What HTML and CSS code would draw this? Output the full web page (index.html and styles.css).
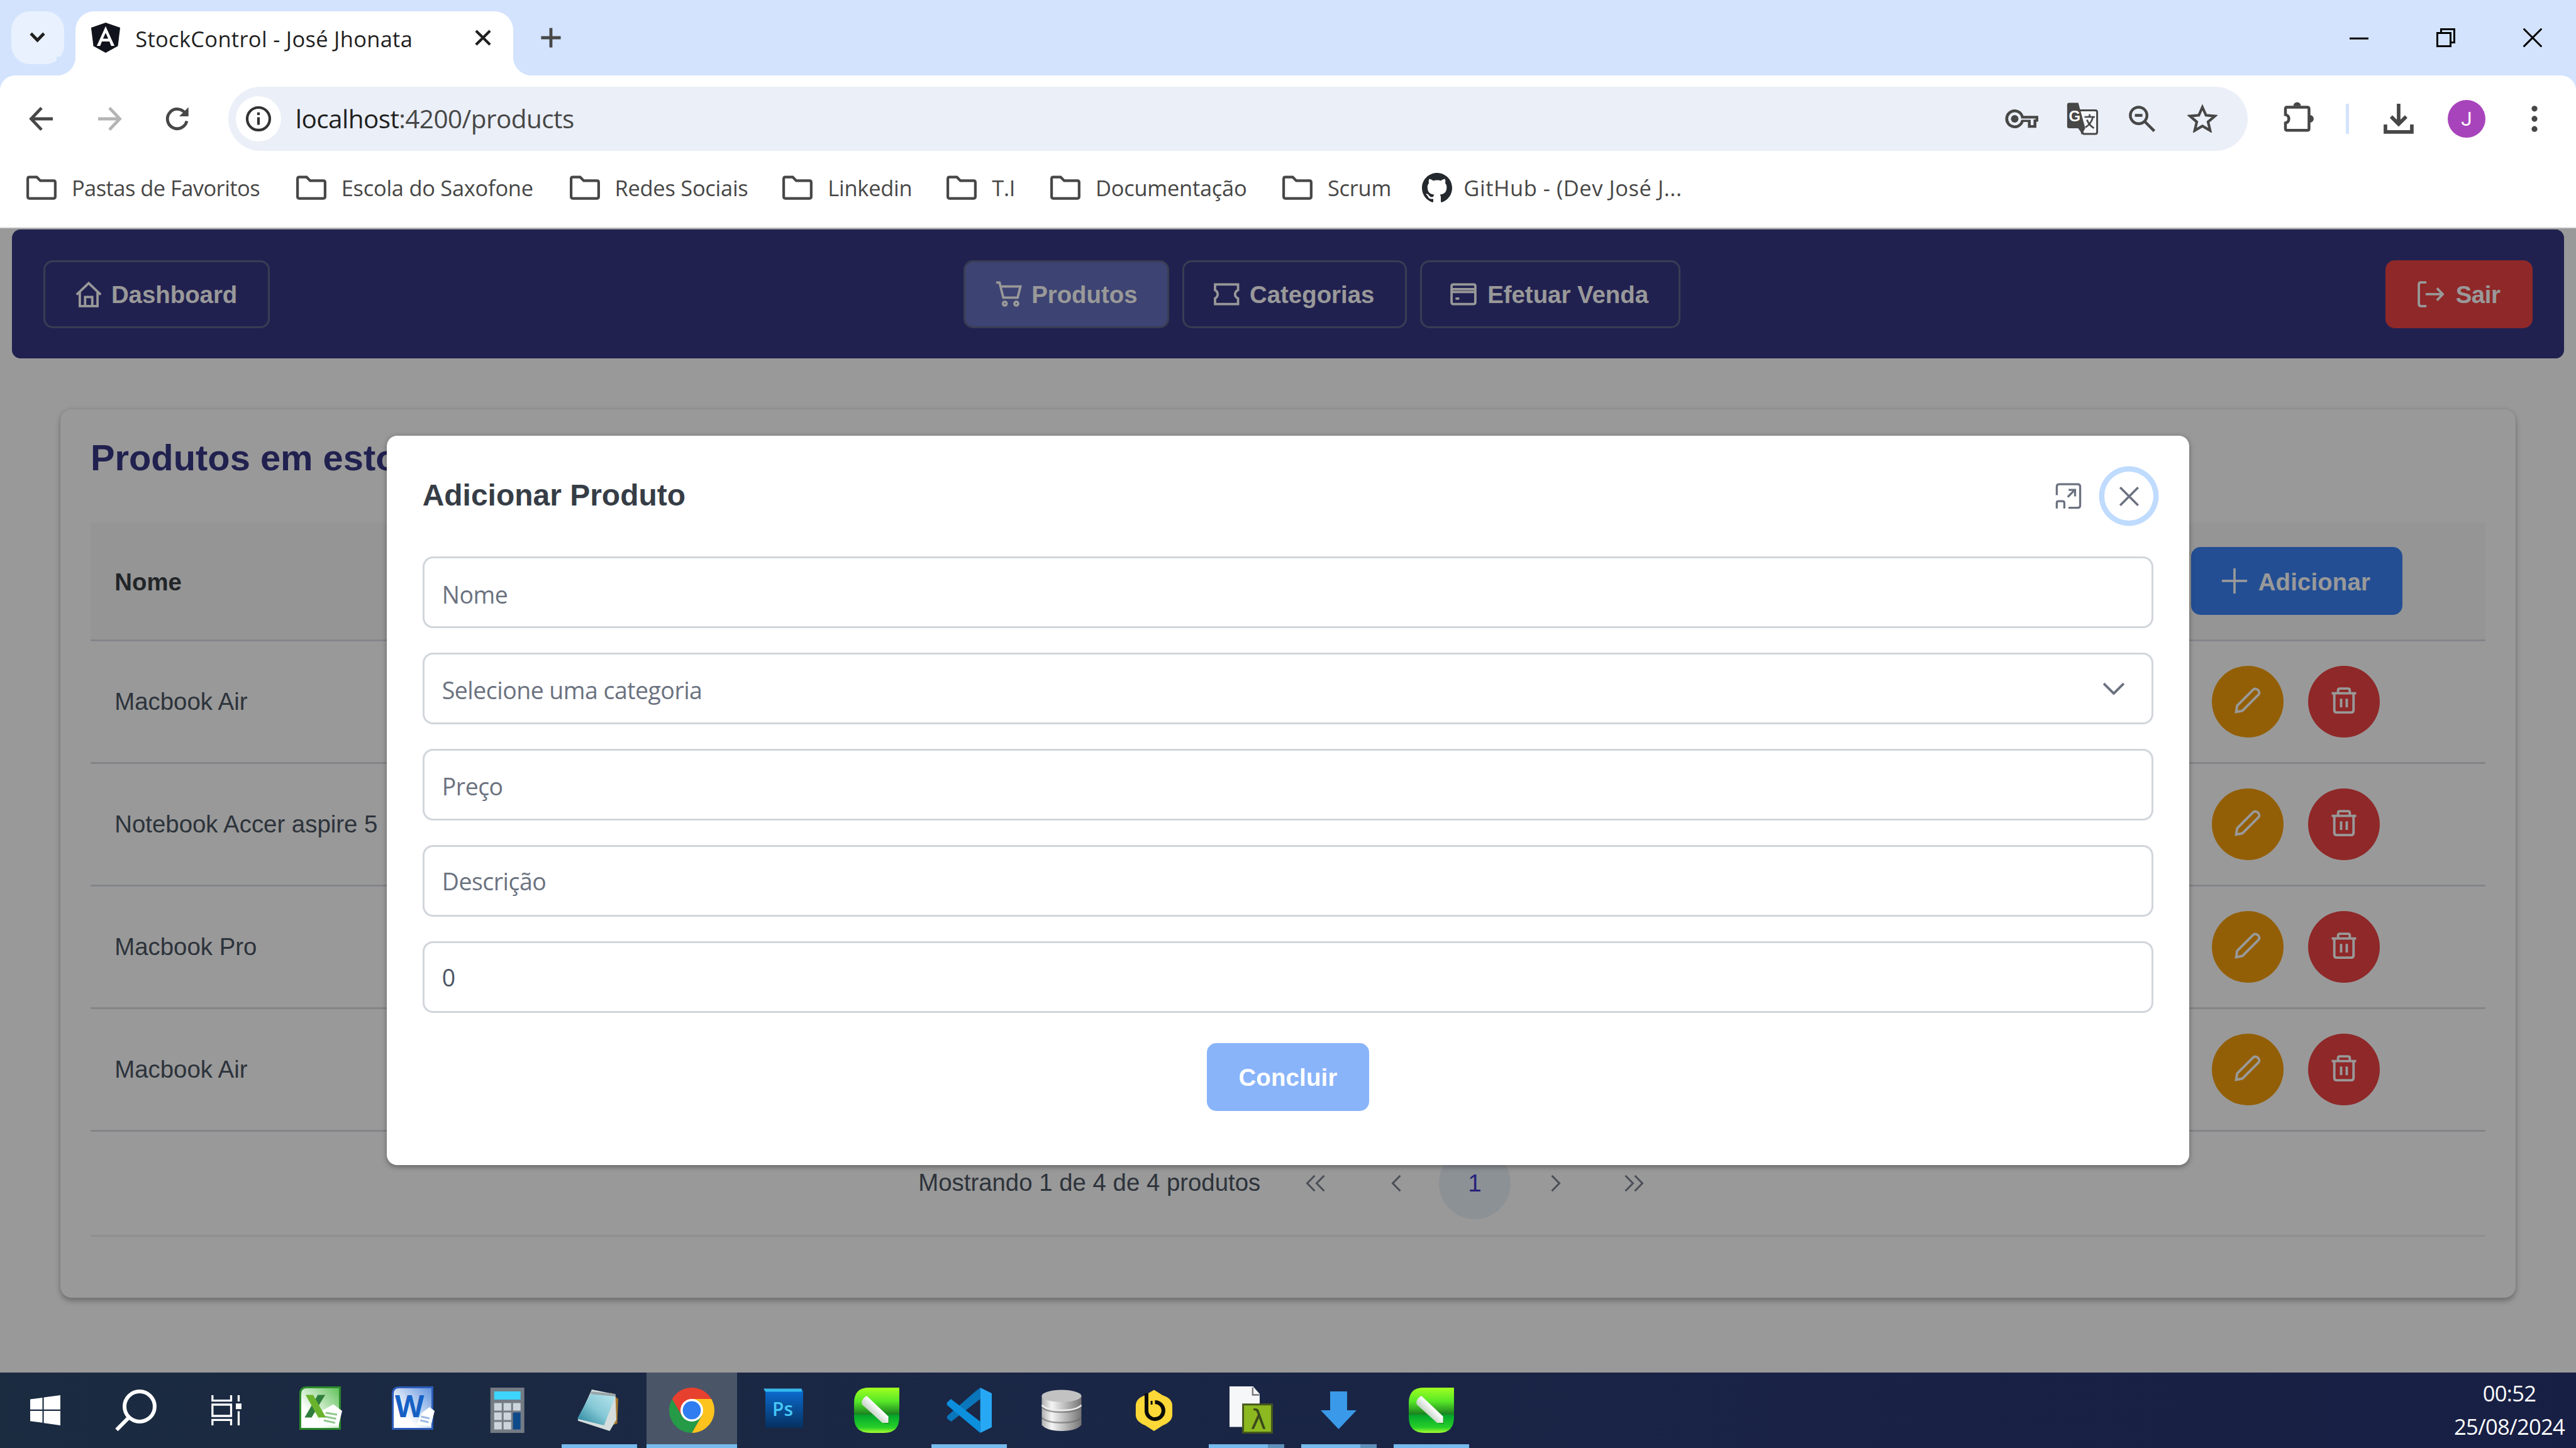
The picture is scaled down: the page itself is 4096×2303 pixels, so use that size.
FILE: index.html
```html
<!DOCTYPE html>
<html lang="pt-BR">
<head>
<meta charset="utf-8">
<title>StockControl - José Jhonata</title>
<link rel="stylesheet" href="styles.css">
</head>
<body>
<svg class="defs" aria-hidden="true">
  <defs>
    <linearGradient id="g-green" x1="0" y1="0" x2="0" y2="1"><stop offset="0" stop-color="#a0ff20"/><stop offset=".3" stop-color="#58e828"/><stop offset=".58" stop-color="#1c8420"/><stop offset=".62" stop-color="#04a82c"/><stop offset=".88" stop-color="#28d028"/><stop offset="1" stop-color="#a8ff30"/></linearGradient>
    <linearGradient id="g-pen" x1="0" y1="1" x2="1" y2="0"><stop offset=".3" stop-color="#b8c8b8"/><stop offset=".6" stop-color="#ffffff"/></linearGradient>
    <linearGradient id="g-ps" x1="0" y1="0" x2="0" y2="1"><stop offset="0" stop-color="#0a6cd0"/><stop offset="1" stop-color="#06305f"/></linearGradient>
    <linearGradient id="g-db" x1="0" y1="0" x2="1" y2="0"><stop offset="0" stop-color="#b0b0b0"/><stop offset=".25" stop-color="#f4f4f4"/><stop offset="1" stop-color="#757575"/></linearGradient>
    <linearGradient id="g-xl" x1="0" y1="1" x2="1" y2="0"><stop offset=".3" stop-color="#ffffff"/><stop offset="1" stop-color="#5cbf55"/></linearGradient>
    <linearGradient id="g-wd" x1="0" y1="1" x2="1" y2="0"><stop offset=".3" stop-color="#ffffff"/><stop offset="1" stop-color="#5c8fdc"/></linearGradient>
    <linearGradient id="g-np" x1="0" y1="1" x2="1" y2="0"><stop offset="0" stop-color="#1f7f98"/><stop offset=".5" stop-color="#86c9d6"/><stop offset="1" stop-color="#b9e6ee"/></linearGradient>
    <symbol id="i-folder" viewBox="0 0 16 13"><path d="M1.6.9h3.9l1.9 1.9h7q.9 0 .9.9v7.6q0 .9-.9.9H1.600q-.9 0-.9-.9V1.800q0-.9.9-.9z"/></symbol>
    <symbol id="i-pencil" viewBox="0 0 14 14"><path d="M.9 13.100l.5-3.300L9.900 1.300c1.500-1.500 4.300 1.100 2.800 2.700L4.200 12.500z"/></symbol>
    <symbol id="i-trash" viewBox="0 0 14 14"><path d="M.5 3.200h13M1.900 3.400v8.700q0 1.300 1.300 1.300h7.600q1.300 0 1.300-1.300V3.400M3.900 3V1.600q0-.9.9-.9h4.400q.9 0 .9.9V3M5.500 6.100v4.600M8.500 6.100v4.600"/></symbol>
    <symbol id="i-marker" viewBox="0 0 24 24"><path d="M24 0v15.500Q24 24 16 24H8.500Q0 24 0 15.500V8Q0 0 8 0z" fill="url(#g-green)"/><path d="M4.200 7.500L6.600 4.200 18.400 16l.3 3.500-2.500-.4z" fill="#156a18" opacity=".35"/><path d="M4 7.600Q4.500 5.500 6.700 4.300L18.200 15.300v3.400h-3.200L4.300 9z" fill="url(#g-pen)"/></symbol>
  </defs>
</svg>

<header class="tabstrip">
  <div class="tab-search"><svg class="ic-chev" viewBox="0 0 8 6"><path d="M.8 1L4 4.300 7.200 1"/></svg></div>
  <div class="tab">
    <svg class="favicon" viewBox="0 0 16 16"><path d="M8 0l7.700 2.700-1.200 9.700L8 16l-6.500-3.600L.3 2.700z" fill="#11131c"/><path d="M8 1.900L3.300 12.300h1.800l.9-2.300h4l.9 2.300h1.800zm0 3.500l1.400 3.100H6.600z" fill="#fff" fill-rule="evenodd"/></svg>
    <span class="tab-title">StockControl - José Jhonata</span>
    <svg class="tab-close" viewBox="0 0 10 10"><path d="M1.300 1.300l7.400 7.400M8.700 1.300L1.300 8.700"/></svg>
  </div>
  <svg class="new-tab" viewBox="0 0 12 12"><path d="M6 .8v10.400M.8 6h10.400"/></svg>
  <div class="win-controls">
    <svg viewBox="0 0 10 10"><path d="M0 5.400h10"/></svg>
    <svg viewBox="0 0 10 10"><path d="M.5 2.500h7v7h-7zM2.500 2.500v-2h7v7h-2"/></svg>
    <svg viewBox="0 0 10 10"><path d="M.2.2l9.600 9.600M9.800.2L.2 9.800"/></svg>
  </div>
</header>

<div class="toolbar">
  <svg class="nav-ic" viewBox="0 0 16 16"><path d="M14 8H2.800M8 2.200L2.500 8 8 13.800"/></svg>
  <svg class="nav-ic off" viewBox="0 0 16 16"><path d="M2 8h11.200M8 2.200L13.500 8 8 13.800"/></svg>
  <svg class="nav-ic" viewBox="0 0 16 16"><path d="M13 9.200A5.200 5.200 0 1 1 12.300 5.200"/><path d="M13.900 1.800v4.900H9z" class="solid"/></svg>
  <div class="omnibox">
    <div class="site-info"><svg viewBox="0 0 14 14"><circle cx="7" cy="7" r="6"/><path d="M7 6.200v4M7 3.600v1.400"/></svg></div>
    <span class="url"><b>localhost</b>:4200/products</span>
    <div class="omni-icons">
      <svg class="o1" viewBox="0 0 18 12"><path fill-rule="evenodd" d="M5.500 1a5 5 0 1 0 4.700 6.700H12.500V10.800H17V7.500H18V4.400H10.200A5 5 0 0 0 5.500 1zm0 1.500a3.500 3.500 0 0 1 3.500 3.300h7.600v.5h-1.100v3h-1.500V6.500H9a3.500 3.500 0 1 1-3.500-4z" fill="#474747"/><circle cx="5.500" cy="6" r="2" fill="#474747"/></svg>
      <svg class="o2" viewBox="0 0 17 18"><path d="M7 4.500h8.200q1 0 1 1V16q0 1-1 1H9L6 13" fill="#f4f6fb" stroke="#474747" stroke-width="1"/><path d="M1.300.5h4.900l3.700 13.500H1.300Q.3 14 .3 13V1.500Q.3.5 1.300.5z" fill="#474747"/><path d="M6.900 14h3L8 17.500z" fill="#474747"/><text x="1.200" y="10.300" class="g-letter">G</text><path d="M9.500 8h5.500M12.200 6.600V8M14 8q-1 3.800-4 5.500M10.800 9.500q1 2.700 3.700 4.500" fill="none" stroke="#474747" stroke-width=".9"/></svg>
      <svg class="o3" viewBox="0 0 14 14" fill="none" stroke="#474747" stroke-width="1.500"><circle cx="5.200" cy="5.200" r="4.400"/><path d="M8.500 8.500l5 5M3.200 5.200h4"/></svg>
      <svg class="o4" viewBox="0 0 16 15"><path d="M8 1.500l1.900 4.300 4.700.4-3.600 3.100 1.100 4.600L8 11.500l-4.100 2.400L5 9.300 1.400 6.200l4.700-.4z" fill="none" stroke="#474747" stroke-width="1.400"/></svg>
    </div>
  </div>
  <svg class="puzzle" viewBox="0 0 17 16"><path d="M1.900 2.800H12.600q.9 0 .9.9v10.500q0 .9-.9.9H1.900q-.9 0-.9-.9V11.200q1.800-.4 1.800-2.200T1 6.800V3.700q0-.9.900-.9z" fill="none" stroke="#474747" stroke-width="1.500"/><path d="M5.200 2.200a2 2 0 0 1 4 0zM14 7a2 2 0 0 1 0 4z" fill="#474747"/></svg>
  <i class="tb-sep"></i>
  <svg class="download" viewBox="0 0 16 16"><path d="M8 0v10.500M4 6.800l4 4 4-4M1 11v4h14v-4" fill="none" stroke="#474747" stroke-width="1.900"/></svg>
  <span class="avatar">J</span>
  <svg class="dots" viewBox="0 0 4 14"><circle cx="2" cy="1.600" r="1.550"/><circle cx="2" cy="7" r="1.550"/><circle cx="2" cy="12.400" r="1.550"/></svg>
</div>

<nav class="bookmarks">
  <a class="tight"><svg><use href="#i-folder"/></svg><span>Pastas de Favoritos</span></a>
  <a><svg><use href="#i-folder"/></svg><span>Escola do Saxofone</span></a>
  <a><svg><use href="#i-folder"/></svg><span>Redes Sociais</span></a>
  <a><svg><use href="#i-folder"/></svg><span>Linkedin</span></a>
  <a><svg><use href="#i-folder"/></svg><span>T.I</span></a>
  <a><svg><use href="#i-folder"/></svg><span>Documentação</span></a>
  <a><svg><use href="#i-folder"/></svg><span>Scrum</span></a>
  <a class="gh"><svg viewBox="0 0 16 16"><path fill="#24292e" d="M8 0C3.580 0 0 3.580 0 8c0 3.540 2.290 6.530 5.470 7.590.4.070.55-.17.55-.38 0-.19-.01-.82-.01-1.490-2.010.37-2.530-.49-2.690-.94-.09-.23-.48-.94-.82-1.130-.28-.15-.68-.52-.01-.53.63-.01 1.080.58 1.230.82.72 1.210 1.870.87 2.330.66.07-.52.28-.87.51-1.070-1.780-.2-3.640-.89-3.640-3.950 0-.87.31-1.590.82-2.150-.08-.2-.36-1.020.08-2.120 0 0 .67-.21 2.200.82.64-.18 1.320-.27 2-.27s1.360.09 2 .27c1.530-1.040 2.200-.82 2.200-.82.44 1.100.16 1.920.08 2.120.51.56.82 1.270.82 2.150 0 3.070-1.870 3.750-3.650 3.950.29.25.54.73.54 1.480 0 1.070-.01 1.930-.01 2.200 0 .21.15.46.55.38A8.010 8.010 0 0 0 16 8c0-4.420-3.580-8-8-8z"/></svg><span>GitHub - (Dev José J...</span></a>
</nav>

<main class="page">
  <nav class="appbar">
    <a class="btn outline dash"><svg viewBox="0 0 14 14"><path d="M.6 7.200L7 1.100l6.400 6.100M2.300 6v7.300h9.400V6M5.100 13.300V8.500h3.800v4.800"/></svg><span>Dashboard</span></a>
    <div class="menu">
      <a class="btn outline active prod"><svg viewBox="0 0 14 14"><path d="M.3.8h1.800l2 8h7.600l1.500-5.900H2.700"/><circle cx="4.900" cy="12" r="1"/><circle cx="11" cy="12" r="1"/></svg><span>Produtos</span></a>
      <a class="btn outline cat"><svg viewBox="0 0 14 14"><path d="M1 1.800h12.200v3q-1.600.8-1.600 2.200t1.600 2.200v3H1v-3Q2.400 8.400 2.400 7T1 4.800z"/></svg><span>Categorias</span></a>
      <a class="btn outline sale"><svg viewBox="0 0 14 14"><path d="M1.600 1.800h10.800q.9 0 .9.900v8.600q0 .9-.9.900H1.600q-.9 0-.9-.9V2.700q0-.9.9-.9zM.8 4.300h12.400M.8 5.800h12.400M2.800 9.300h2"/></svg><span>Efetuar Venda</span></a>
    </div>
    <a class="btn danger"><svg viewBox="0 0 14 14"><path d="M4.700.7H1.900q-1.200 0-1.200 1.200v10.200q0 1.200 1.200 1.200h2.800M4.300 7h9M10.300 3.800L13.400 7l-3.100 3.200"/></svg><span>Sair</span></a>
  </nav>

  <section class="card">
    <h1>Produtos em estoque</h1>
    <div class="thead"><span>Nome</span><a class="btn primary"><svg viewBox="0 0 14 14"><path d="M7 .3v13.400M.3 7h13.400"/></svg><span>Adicionar</span></a></div>
    <div class="row"><span>Macbook Air</span><a class="round edit"><svg><use href="#i-pencil"/></svg></a><a class="round del"><svg><use href="#i-trash"/></svg></a></div>
    <div class="row"><span>Notebook Accer aspire 5</span><a class="round edit"><svg><use href="#i-pencil"/></svg></a><a class="round del"><svg><use href="#i-trash"/></svg></a></div>
    <div class="row"><span>Macbook Pro</span><a class="round edit"><svg><use href="#i-pencil"/></svg></a><a class="round del"><svg><use href="#i-trash"/></svg></a></div>
    <div class="row"><span>Macbook Air</span><a class="round edit"><svg><use href="#i-pencil"/></svg></a><a class="round del"><svg><use href="#i-trash"/></svg></a></div>
    <div class="paginator">
      <span class="report">Mostrando 1 de 4 de 4 produtos</span>
      <a><svg viewBox="0 0 12 12"><path d="M5.500 1.900L1.500 6l4 4.100M10.500 1.900L6.500 6l4 4.100"/></svg></a>
      <a><svg viewBox="0 0 12 12"><path d="M8.500 1.900L4.500 6l4 4.100"/></svg></a>
      <a class="current">1</a>
      <a><svg viewBox="0 0 12 12"><path d="M4.500 1.900L8.500 6l-4 4.100"/></svg></a>
      <a><svg viewBox="0 0 12 12"><path d="M1.500 1.900L5.500 6l-4 4.100M6.500 1.900L10.500 6l-4 4.100"/></svg></a>
    </div>
  </section>

  <div class="mask">
    <div class="dialog">
      <div class="dlg-head">
        <h2>Adicionar Produto</h2>
        <svg class="maximize" viewBox="0 0 14 14"><path d="M.8 6.500V2q0-1.300 1.300-1.300h9.800q1.300 0 1.300 1.300v9.900q0 1.300-1.300 1.300H7M.8 13.600v-3q0-.9.900-.9h2.200q.9 0 .9.900v3M6.600 7.500l3.600-3.600M7.100 3.700h3.400v3.500"/></svg>
        <a class="close"><svg viewBox="0 0 12 12"><path d="M.8.800l10.400 10.400M11.200.8L.8 11.200"/></svg></a>
      </div>
      <div class="field ph"><span>Nome</span></div>
      <div class="field ph"><span>Selecione uma categoria</span><svg viewBox="0 0 12 7"><path d="M.7.700L6 6 11.300.7"/></svg></div>
      <div class="field ph"><span>Preço</span></div>
      <div class="field ph up"><span>Descrição</span></div>
      <div class="field up"><span>0</span></div>
      <a class="btn submit"><span>Concluir</span></a>
    </div>
  </div>
</main>

<footer class="taskbar">
  <div class="task"><svg class="s16" viewBox="0 0 16 16"><path fill="#fff" d="M0 2.200L6.500 1.300V7.600H0zM7.200 1.200L16 0v7.600H7.200zM0 8.300h6.500v6.300L0 13.800zM7.200 8.300H16V16l-8.800-1.200z"/></svg></div>
  <div class="task"><svg class="s22" viewBox="0 0 22 22"><g fill="none" stroke="#fff" stroke-width="2"><circle cx="13" cy="9" r="8"/><path d="M7.400 14.700L.8 21.400"/></g></svg></div>
  <div class="task tv"><svg class="s16" viewBox="0 0 16 16"><g fill="none" stroke="#fff" stroke-width="1.100"><path d="M.6 0v2.900h9.900V0M.6 16v-2.900h9.900V16M.6 5h9.900v6H.6zM14.500 0v3.300M14.500 8.500V16"/></g><path fill="#fff" d="M13 4.400h3v3h-3z"/></svg></div>
  <div class="task"><svg class="s23" viewBox="0 0 23 23"><path d="M4 .5h17.500v22H.5V4Q.5.500 4 .5z" fill="url(#g-xl)" stroke="#2c8a2c"/><path d="M11 13.500l7-4 4.700 3.500-2 8-9.700-.5z" fill="#fff"/><path d="M14 14l6 1M13.500 16l6 1.200M13 18l6 1.400" stroke="#8fc98a"/><path d="M9.800 4.500h3.900L6.500 16.500H2.800z" fill="#2f7d3c"/><path d="M3.300 4.500h4l6.800 12h-4z" fill="#6ab42d"/></svg></div>
  <div class="task"><svg class="s23" viewBox="0 0 23 23"><path d="M4 .5h17.500v22H.5V4Q.5.500 4 .5z" fill="url(#g-wd)" stroke="#2c5cba"/><path d="M16 14l4-3 2.700 2-2 8-7.700-.5z" fill="#fff"/><path d="M15.500 16l4.500 1M15 18l4.500 1" stroke="#9db8e4"/><text x="1.700" y="16.400" class="w-letter">W</text></svg></div>
  <div class="task"><svg class="calc" viewBox="0 0 18 24"><path fill="#747b84" d="M0 0h18v24H0z"/><path fill="#3dd5fb" d="M2 2h14v4.300H2z"/><path fill="#ccd4dc" d="M2 8.200h4v4H2zM7 8.200h4v4H7zM12 8.200h4v4h-4zM2 13.200h4v4H2zM7 13.200h4v4H7zM2 18.200h4v4H2zM7 18.200h4v4H7z"/><path fill="#0f4a8a" d="M12 13.200h4v9h-4z"/></svg></div>
  <div class="task open"><svg class="s22 note" viewBox="0 0 22 22"><path d="M18 1.500l4 3.500-.5 13-3 1z" fill="#a8772c"/><path d="M8 0l12.500 2.500L21 16l-3.500 6L.5 16.500z" fill="#d5dddd"/><path d="M7.500 2.200L20.500 3.500 14.500 19 .3 15.500z" fill="url(#g-np)"/><path d="M7.500 1.700l13 1.300" stroke="#98a5a8" stroke-width="1.400"/></svg></div>
  <div class="task open focus"><svg class="s24" viewBox="0 0 24 24"><path d="M12 12L1.600 6A12 12 0 0 1 22.400 6z" fill="#e8402f"/><path d="M12 12V6h10.400A12 12 0 0 1 12 24l5.200-9z" fill="#fcc21d"/><path d="M12 12l5.200 3L12 24A12 12 0 0 1 1.600 6l5.200 9z" fill="#259a47"/><path d="M1.600 6L12 6v6l-5.200 3z" fill="#e8402f"/><circle cx="12" cy="12" r="6" fill="#fff"/><circle cx="12" cy="12" r="4.800" fill="#2f7df0"/></svg></div>
  <div class="task"><svg class="ps" viewBox="0 0 22 21"><path d="M1 1h20v20H1z" fill="url(#g-ps)"/><path d="M0 .2h20.300v1.600H1z" fill="#35b8ee"/><text x="4.700" y="14.800" class="ps-letter">Ps</text></svg></div>
  <div class="task"><svg class="s24"><use href="#i-marker"/></svg></div>
  <div class="task open"><svg class="s24" viewBox="0 0 24 24"><path d="M17.500 0L5 13.200 2.600 18 .3 16.500v-1.400L17.500 0z" fill="#0a70b5"/><path d="M.3 15.500l2.200 2.500L17.900 6V0z" fill="#0a76bc"/><path d="M.2 8L2.300 6l15.600 12v6L.2 9.200z" fill="#0c8fdd"/><path d="M17.900 0L24 3v18l-6.100 3z" fill="#27a8f5"/></svg></div>
  <div class="task"><svg class="s22" viewBox="0 0 22 22"><path d="M.5 3.500v15.300Q3 22 11 22t10.500-3.200V3.500z" fill="url(#g-db)"/><path d="M.5 9.300Q3 12 11 12t10.500-2.700M.5 14.900q2.500 2.700 10.500 2.700t10.500-2.700" fill="none" stroke="#666" stroke-width=".8" opacity=".6"/><path d="M.5 8.300Q3 11 11 11t10.500-2.700" fill="none" stroke="#eee" stroke-width=".8"/><ellipse cx="11" cy="3.400" rx="10.500" ry="3.200" fill="#c2c2c2"/></svg></div>
  <div class="task"><svg class="s22" viewBox="0 0 22 22"><path d="M11 .2l4.500 2.800q5.200 1.800 5.200 5.500v5q0 3.500-5 5.500L11 22l-4.700-3q-5-2-5-5.500v-5q0-3.700 5-5.500z" fill="#fbd737"/><path d="M7 2v9.500a4.500 4.500 0 1 0 4.500-4.800" fill="none" stroke="#0a0a0a" stroke-width="2"/><path d="M9.700 6v2" stroke="#0a0a0a"/></svg></div>
  <div class="task open stack fl"><svg class="file" viewBox="0 0 23 25"><path d="M0 0h12.500L16 4v17.500H0z" fill="#f6f7f8"/><path d="M12.300.5v4h3.500" fill="none" stroke="#777" stroke-width=".8"/><path d="M7.200 9.600h15.300v14.900H7.200z" fill="#8cb820" stroke="#47581c"/><text x="11.200" y="22.700" class="lambda">λ</text></svg></div>
  <div class="task open stack"><svg class="down" viewBox="0 0 19 20"><path d="M5 0h9v10h5l-9.500 10L0 10h5z" fill="#3a99e8"/></svg></div>
  <div class="task open"><svg class="s24"><use href="#i-marker"/></svg></div>
  <div class="clock"><span>00:52</span><span>25/08/2024</span></div>
</footer>
</body>
</html>
```
FILE: styles.css
```css
/* 1rem = 10 desktop pixels on a 1366 x 768 desktop */
html { font-size: 29.985px; }
* { box-sizing: border-box; }
body {
  margin: 0; width: 4096px; height: 2303px; overflow: hidden;
  display: flex; flex-direction: column;
  font-family: "Open Sans", "Noto Sans", sans-serif; font-size: 1.15rem; color: #474747;
}
svg { display: block; flex: none; fill: none; }
span { white-space: nowrap; }
.defs { position: absolute; width: 0; height: 0; }

/* tab strip */
.tabstrip { flex: none; height: 4rem; background: #d3e3fd; display: flex; align-items: center; padding-left: .6rem; }
.tab-search { width: 2.8rem; height: 2.8rem; border-radius: 1rem; background: #e9f1fe; display: flex; align-items: center; justify-content: center; }
.ic-chev { width: .9rem; height: .65rem; stroke: #1f1f1f; stroke-width: 1.5; }
.tab { position: relative; align-self: flex-end; width: 23.2rem; height: 3.4rem; margin-left: .6rem; padding: 0 1.1rem .6rem .8rem; background: #fff; border-radius: 1rem 1rem 0 0; display: flex; align-items: center; }
.tab::before, .tab::after { content: ""; position: absolute; bottom: 0; width: 1rem; height: 1rem; }
.tab::before { right: 100%; background: radial-gradient(circle at 0 0, #d3e3fd 1rem, #fff 1.02rem); }
.tab::after { left: 100%; background: radial-gradient(circle at 100% 0, #d3e3fd 1rem, #fff 1.02rem); }
.favicon { width: 1.6rem; height: 1.6rem; }
.tab-title { margin-left: .78rem; padding-top: .1rem; color: #1f1f1f; letter-spacing: .009em; }
.tab-close { width: 1rem; height: 1rem; margin-left: auto; stroke: #1f1f1f; stroke-width: 1.4; }
.new-tab { width: 1.2rem; height: 1.2rem; margin-left: 1.4rem; stroke: #474747; stroke-width: 1.6; }
.win-controls { margin-left: auto; display: flex; gap: 3.6rem; padding-right: 1.8rem; }
.win-controls svg { width: 1rem; height: 1rem; stroke: #000; stroke-width: 1; }

/* toolbar */
.toolbar { flex: none; height: 4.6rem; background: #fff; display: flex; align-items: center; padding-left: 1.4rem; border-radius: .8rem .8rem 0 0; box-shadow: 0 -.8rem 0 #d3e3fd; }
.tabstrip { z-index: 1; }
.nav-ic { width: 1.6rem; height: 1.6rem; margin-right: 2rem; stroke: #474747; stroke-width: 1.6; }
.nav-ic .solid { fill: #474747; stroke: none; }
.nav-ic.off { opacity: .4; }
.omnibox { width: 107.1rem; height: 3.4rem; margin-left: -.1rem; border-radius: 1.7rem; background: #ebeff8; display: flex; align-items: center; padding: 0 1.6rem 0 .4rem; }
.site-info { width: 2.4rem; height: 2.4rem; border-radius: 50%; background: #fff; display: flex; align-items: center; justify-content: center; }
.site-info svg { width: 1.4rem; height: 1.4rem; stroke: #333; stroke-width: 1.4; }
.url { margin-left: .77rem; font-size: 1.35rem; letter-spacing: -.014em; }
.url b { font-weight: 400; color: #1f1f1f; }
.omni-icons { margin-left: auto; display: flex; align-items: center; }
.o1 { width: 1.8rem; height: 1.2rem; margin-right: 1.5rem; }
.o2 { width: 1.7rem; height: 1.8rem; margin-right: 1.6rem; }
.o3 { width: 1.4rem; height: 1.4rem; margin-right: 1.7rem; }
.o4 { width: 1.6rem; height: 1.5rem; }
.g-letter { font: 700 8px "Liberation Sans", sans-serif; fill: #fff; }
.puzzle { width: 1.7rem; height: 1.6rem; margin: -.2rem 0 0 1.9rem; }
.tb-sep { width: .18rem; height: 1.6rem; margin-left: 1.6rem; background: #d3e3fd; }
.download { width: 1.6rem; height: 1.6rem; margin-left: 1.82rem; }
.avatar { width: 2rem; height: 2rem; margin-left: 1.8rem; border-radius: 50%; background: #a844bb; color: #fff; font: 1.05rem/2.05rem Roboto, sans-serif; text-align: center; }
.dots { width: .4rem; height: 1.4rem; margin-left: 2.4rem; }
.dots circle { fill: #474747; }

/* bookmarks */
.bookmarks { flex: none; height: 3.5rem; background: #fff; padding: 0 0 .7rem 1.4rem; display: grid; align-items: center; grid-template-columns: 14.3rem 14.5rem 11.3rem 8.7rem 5.5rem 12.3rem 7.4rem auto; border-bottom: 2px solid #dfe0e0; letter-spacing: -.008em; }
.bookmarks a { display: flex; align-items: center; gap: .8rem; }
.bookmarks svg { width: 1.6rem; height: 1.3rem; stroke: #474747; stroke-width: 1.4; }
.bookmarks .tight { letter-spacing: -.016em; }
.bookmarks .gh { gap: .62rem; letter-spacing: .016em; }
.bookmarks .gh svg { height: 1.6rem; stroke: none; }

/* application page */
.page { position: relative; flex: none; height: 60.7rem; background: #fff; font-family: "Liberation Sans", Arial, sans-serif; font-size: 1.28rem; color: #4b5563; padding: .08rem .65rem 0; }
.appbar { height: 6.84rem; border-radius: .45rem; background: #373785; display: flex; align-items: center; padding: 0 1.65rem; }
.btn { height: 3.6rem; border-radius: .5rem; display: flex; align-items: center; color: #fff; font-weight: 700; font-size: 1.28rem; line-height: 3.6rem; }
.btn svg { width: 1.4rem; height: 1.4rem; stroke: currentColor; stroke-width: 1.25; }
.outline { border: 3px solid #60678a; }
.btn > span { padding-top: .05rem; }
.active { background: #6671be; }
.dash { width: 12rem; padding-left: 1.6rem; gap: .5rem; }
.menu { margin-left: 36.8rem; display: flex; gap: .7rem; }
.prod { width: 10.9rem; padding-left: 1.6rem; gap: .5rem; }
.cat { width: 11.9rem; padding-left: 1.55rem; gap: .52rem; }
.sale { width: 13.8rem; padding-left: 1.5rem; gap: .58rem; }
.danger { width: 7.8rem; margin-left: auto; padding-left: 1.7rem; gap: .62rem; background: #ef4444; letter-spacing: -.012em; }
.primary { width: 11.2rem; padding-left: 1.6rem; gap: .55rem; background: #3b82f6; letter-spacing: .004em; }
.primary > span { padding-top: .12rem; }

.card { width: 130.2rem; height: 47.1rem; margin: 2.7rem 0 0 2.55rem; padding: 1.4rem 1.6rem 0; border-radius: .6rem; background: #fff; box-shadow: 0 .2rem .3rem rgba(0,0,0,.22), 0 0 .3rem rgba(0,0,0,.12); }
.card h1 { margin: 0 0 2.2rem; height: 2.4rem; font-size: 1.93rem; line-height: 2.4rem; color: #373785; }
.thead, .row { display: flex; align-items: center; padding-left: 1.28rem; border-bottom: 3px solid #dbdee4; }
.thead { height: 6.3rem; background: #f8f8f8; color: #3a3e44; font-weight: 700; padding-right: 4.4rem; }
.row { height: 6.5rem; padding-right: 5.6rem; }
.thead > span, .row > span { margin-right: auto; }
.thead > span { padding-top: .1rem; }
.round { width: 3.8rem; height: 3.8rem; border-radius: 50%; display: flex; align-items: center; justify-content: center; color: #fff; }
.round svg { width: 1.4rem; height: 1.4rem; margin-bottom: .1rem; stroke: currentColor; stroke-width: 1.3; }
.edit { background: #f59e0b; margin-right: 1.3rem; }
.del { background: #ef4444; }
.paginator { height: 5.6rem; padding-left: 43.9rem; display: flex; align-items: center; gap: .42rem; border-bottom: 3px solid #eff0f1; }
.paginator a { width: 3.8rem; height: 3.8rem; border-radius: 50%; display: flex; align-items: center; justify-content: center; }
.paginator svg { width: 1.2rem; height: 1.2rem; stroke: #7c838f; stroke-width: 1; }
.report { margin: 0 .65rem .1rem 0; width: 18.1rem; }
.current { background: #eaf2fa; color: #4338ca; }

/* dialog */
.mask { position: absolute; inset: 0; background: rgba(0,0,0,.4); }
.dialog { position: absolute; left: 20.5rem; top: 11rem; width: 95.6rem; height: 38.7rem; padding: 0 1.9rem; border-radius: .55rem; background: #fff; box-shadow: 0 .1rem .3rem rgba(0,0,0,.35); }
.dlg-head { height: 6.43rem; display: flex; align-items: center; }
.dlg-head h2 { margin: -.12rem auto 0 0; font-size: 1.6rem; color: #363d46; white-space: nowrap; }
.maximize { width: 1.4rem; height: 1.4rem; stroke: #6b7280; stroke-width: 1.1; }
.close { width: 2.6rem; height: 2.6rem; margin: 0 0 0 1.2rem; border-radius: 50%; box-shadow: 0 0 0 .28rem #bfdbfe; display: flex; align-items: center; justify-content: center; }
.close svg { width: 1.1rem; height: 1.1rem; stroke: #6b7280; stroke-width: 1.3; }
.field { height: 3.8rem; margin-bottom: 1.3rem; padding: .18rem 1.4rem 0 .94rem; border: 3px solid #d1d5db; border-radius: .55rem; display: flex; align-items: center; justify-content: space-between; font-family: "Open Sans", "Noto Sans", sans-serif; font-size: 1.25rem; letter-spacing: -.014em; color: #4b5563; }
.up { padding-top: .02rem; }
.ph { color: #6b7280; }
.field svg { width: 1.2rem; height: .7rem; margin-bottom: .2rem; stroke: #6b7280; stroke-width: 1.3; }
.submit { width: 8.6rem; margin: 1.6rem auto 0; justify-content: center; background: #89b4fa; letter-spacing: .005em; }

/* taskbar */
.taskbar { flex: none; height: 4rem; display: flex; background: linear-gradient(90deg, #1b2b40, #1a2646 45%, #181f44); color: #fff; }
.task { position: relative; width: 4.8rem; height: 4rem; display: flex; align-items: center; justify-content: center; margin-right: .1rem; }
.task:nth-child(-n+2) { margin-right: 0; }
.tv { margin-right: .3rem; }
.open::after { content: ""; position: absolute; left: .4rem; right: .4rem; bottom: 0; height: .2rem; background: #76b9ed; }
.stack::after { background: linear-gradient(90deg, #76b9ed 3.15rem, #5d8fb8 3.15rem); }
.focus { background: #4a5568; }
.focus::after { left: 0; right: 0; }
.s16 { width: 1.6rem; height: 1.6rem; }
.s22 { width: 2.2rem; height: 2.2rem; }
.s23 { width: 2.3rem; height: 2.3rem; margin: 0 .15rem .2rem 0; }
.s24 { width: 2.4rem; height: 2.4rem; }
.note { margin-right: .2rem; }
.calc { width: 1.85rem; height: 2.4rem; }
.ps { width: 2.2rem; height: 2.1rem; margin-bottom: .2rem; }
.ps-letter { font: 600 10px "Open Sans", sans-serif; fill: #45c6f7; }
.w-letter { font: 700 16px "Open Sans", sans-serif; fill: #1660c4; }
.lambda { font: 14px "DejaVu Sans", sans-serif; fill: #3a4a1c; }
.file { width: 2.3rem; height: 2.5rem; }
.fl { padding-left: .5rem; }
.down { width: 1.9rem; height: 2rem; }
.clock { margin-left: auto; padding: .2rem .6rem 0 0; display: flex; flex-direction: column; align-items: center; line-height: 1.78rem; letter-spacing: -.02em; }
```
